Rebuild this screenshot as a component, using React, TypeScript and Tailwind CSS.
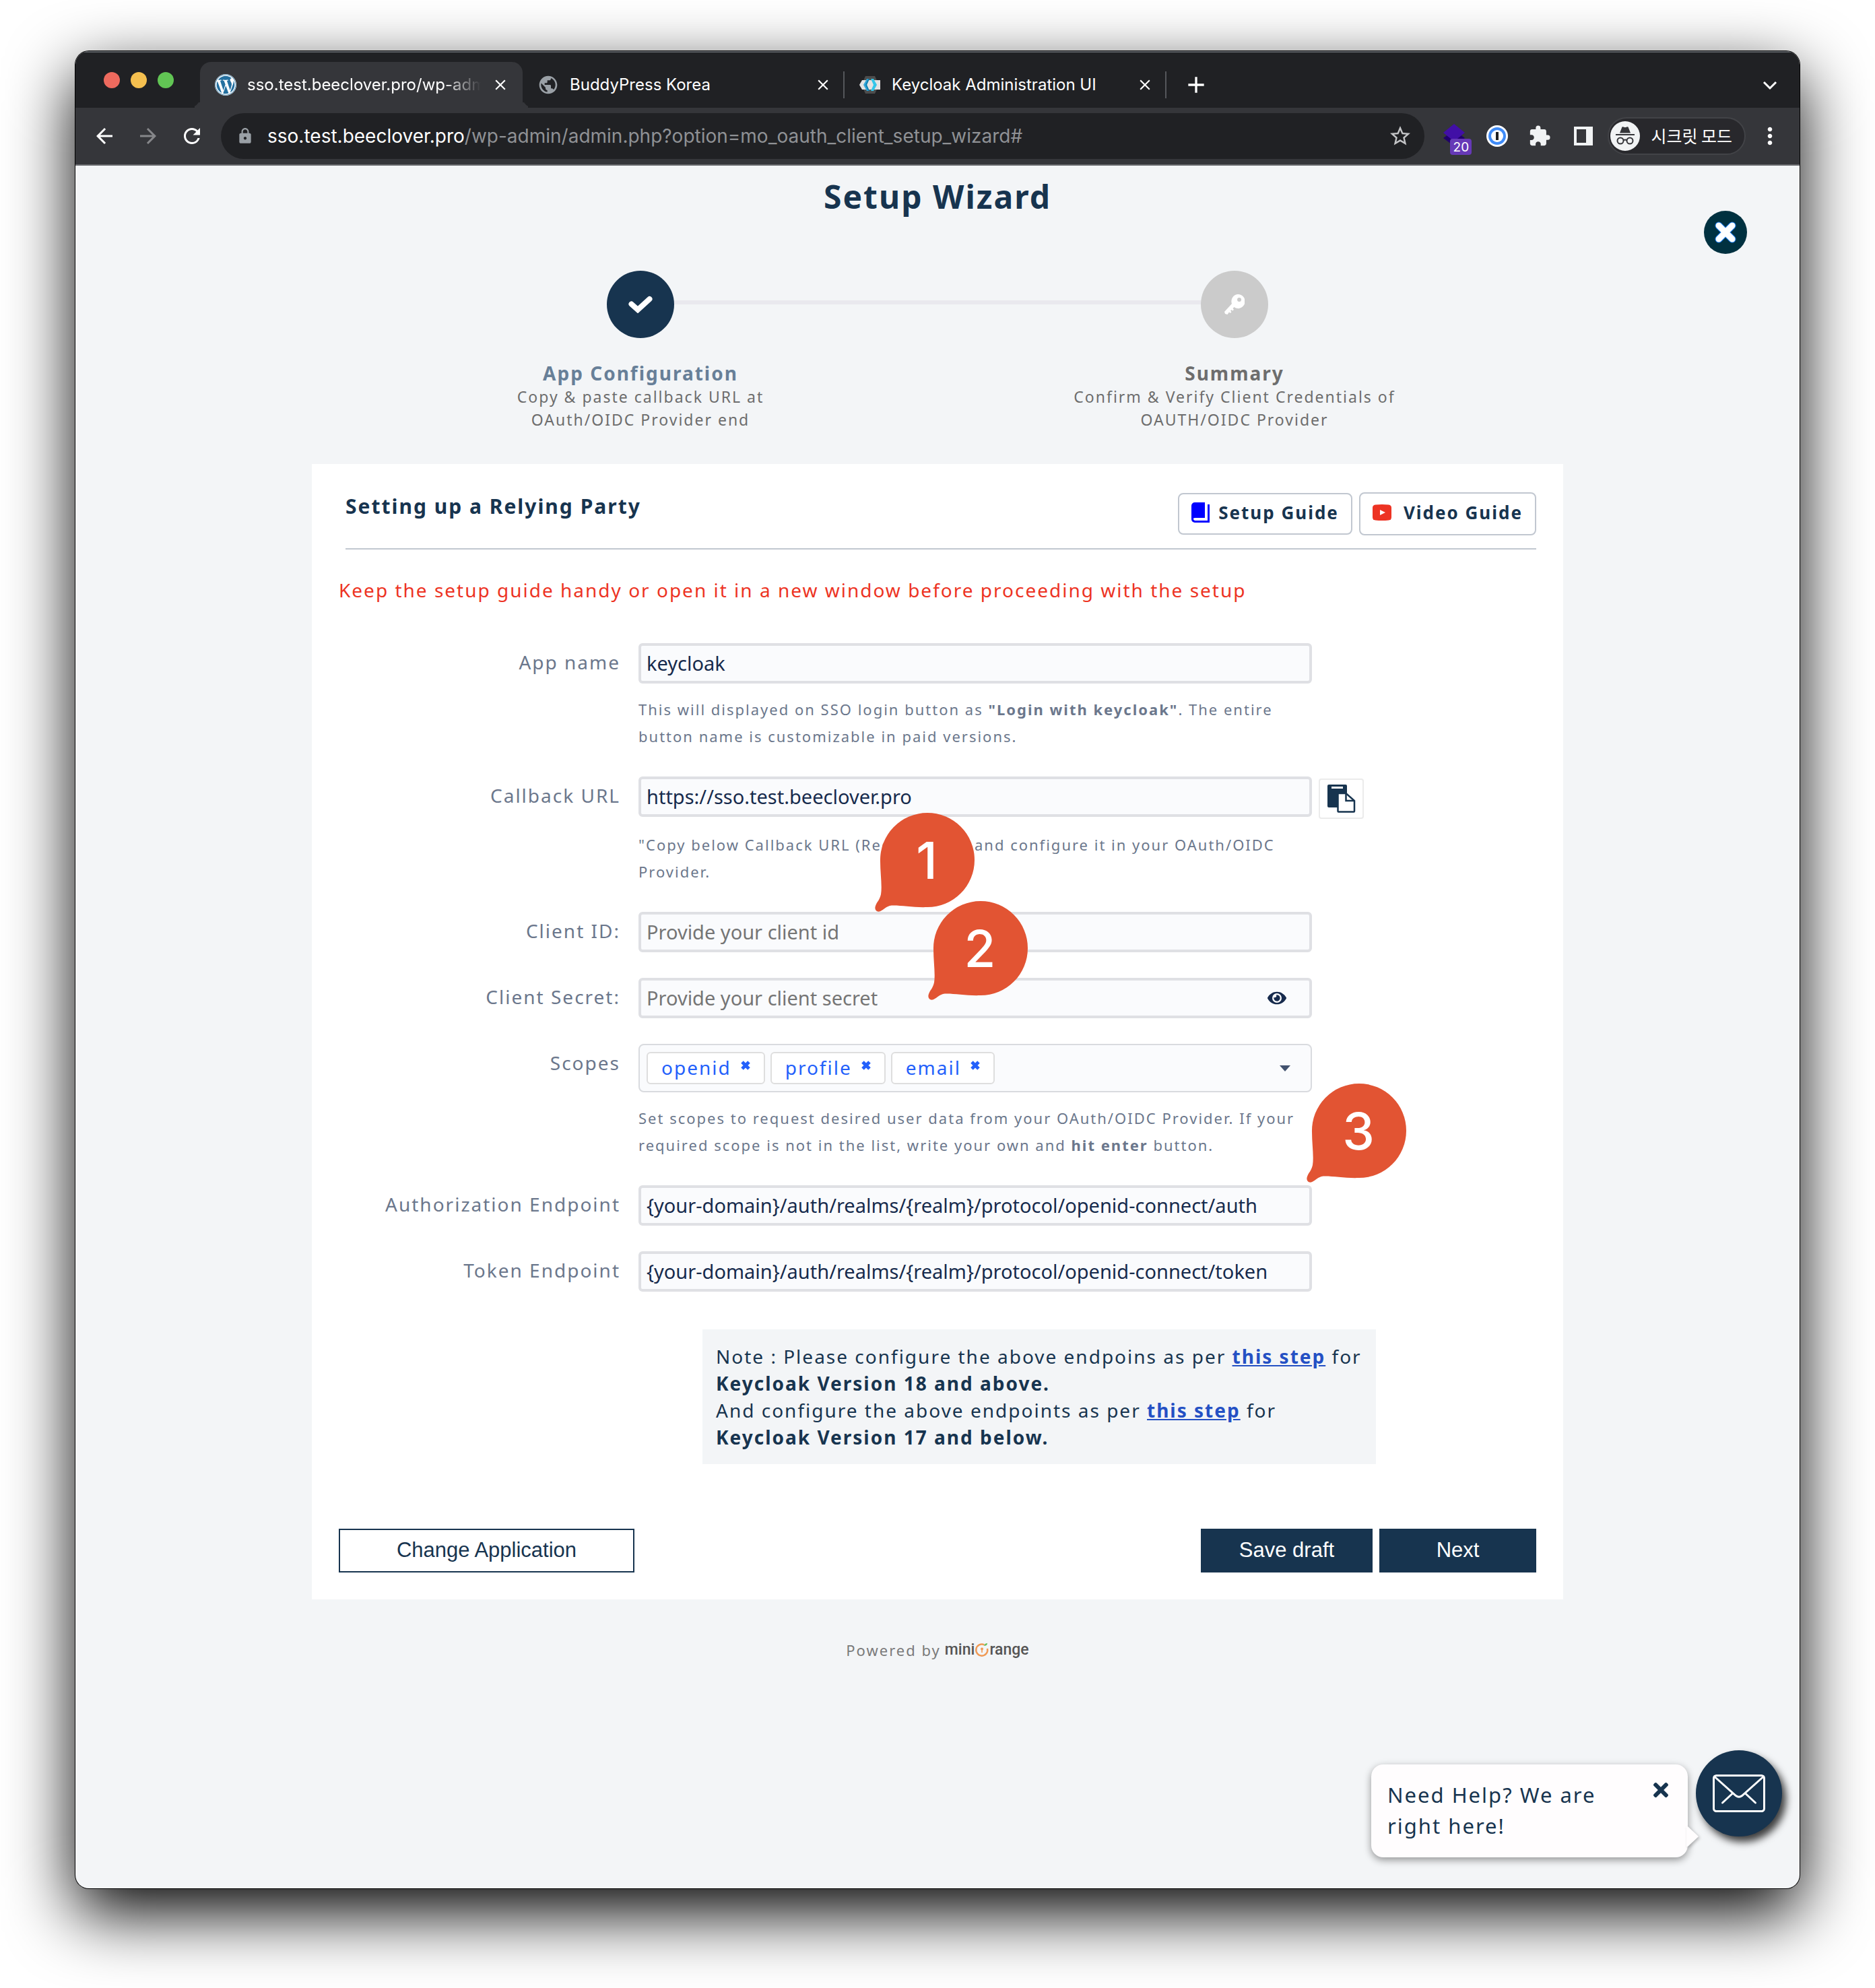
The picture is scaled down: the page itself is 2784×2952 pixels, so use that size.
import { useState, type ReactNode } from "react";
import { FaEye, FaTimes, FaWordpress } from "react-icons/fa";
import {
  MdAdd,
  MdArrowBack,
  MdArrowForward,
  MdClose,
  MdExtension,
  MdLock,
  MdMoreVert,
  MdPublic,
  MdRefresh,
  MdStarBorder,
} from "react-icons/md";

function KeycloakIcon() {
  return (
    <svg viewBox="0 0 32 32" className="size-8 shrink-0" aria-hidden="true">
      <path d="M9 3h14l6 13-6 13H9L3 16z" fill="#4d4d4d" />
      <path d="M4 9h27v14H4L0 16z" fill="#e3e3e3" />
      <path d="M11 7h4l-4 9 4 9h-4l-5-9z" fill="#33a7d8" />
      <path d="M17 7h4l5 9-5 9h-4l4-9z" fill="#33c6e9" />
      <path d="M13 7h2l-4 9 4 9h-2l-4-9z" fill="#0d7fb0" />
    </svg>
  );
}

function BookIcon() {
  return (
    <svg viewBox="0 0 28 30" className="h-[30px] w-7 shrink-0" aria-hidden="true">
      <path d="M5 0h15v23H5.500a2 2 0 0 0-2 1.500A2 2 0 0 0 5.500 27H24V3h3v27H5a5 5 0 0 1-5-5V5a5 5 0 0 1 5-5z" fill="#0000ff" />
      <path d="M3 24.500h19V3" fill="none" stroke="#fff" strokeWidth="2" />
    </svg>
  );
}

function VideoIcon() {
  return (
    <svg viewBox="0 0 28 24" className="h-6 w-7 shrink-0" aria-hidden="true">
      <path d="M4 .5Q14-.5 24 .5q4 .5 4 4.500v14q0 4-4 4.500-10 1-20 0-4-.5-4-4.500V5Q0 1 4 .5z" fill="#ed3323" />
      <path d="M11 8l8 4-8 4z" fill="#fff" />
    </svg>
  );
}

function CheckIcon() {
  return (
    <svg viewBox="0 0 36 26" className="h-[26px] w-9" aria-hidden="true">
      <path d="M4.500 12.500l9.500 8.500L31.500 5" fill="none" stroke="currentColor" strokeWidth="8" strokeLinecap="round" strokeLinejoin="miter" />
    </svg>
  );
}

function KeyIcon() {
  return (
    <svg viewBox="0 0 30 30" className="size-[30px]" aria-hidden="true">
      <path
        fillRule="evenodd"
        d="M19.500 0A10.500 10.500 0 1 1 17 20.500L14.500 19l-2 2 1.500 1.800-1.800 1.800-1.700-1.600-1.500 1.500 1.500 1.700-1.700 1.700-1.800-1.500L4.500 30 1 29 0 26 11 14A10.500 10.500 0 0 1 19.500 0zM22 5a3 3 0 1 0 .1 6A3 3 0 0 0 22 5z"
        fill="currentColor"
      />
    </svg>
  );
}

function PasteIcon() {
  return (
    <svg viewBox="0 0 42 42" className="size-[42px]" aria-hidden="true">
      <path d="M2 0h25q2 0 2 2v10L16 34H2q-2 0-2-2V2q0-2 2-2z" fill="#17344f" />
      <path d="M6 3h17v3H6z" fill="#fff" />
      <path d="M15.500 13h12L40 24v15.500q0 1-1 1H16.500q-1 0-1-1z" fill="#fff" stroke="#17344f" strokeWidth="2.500" />
      <path d="M27.500 13v11H40" fill="none" stroke="#17344f" strokeWidth="2.500" />
    </svg>
  );
}

function IncognitoIcon() {
  return (
    <svg viewBox="0 0 44 44" className="size-11 shrink-0" aria-hidden="true">
      <circle cx="22" cy="22" r="22" fill="#f1f3f4" />
      <path d="M17.500 8.500q1-.5 2 0l2.500.8 2.500-.8q1-.5 2 0l3.500 9H14z" fill="#35363a" />
      <path d="M8 20h28" stroke="#35363a" strokeWidth="2" />
      <g fill="none" stroke="#35363a" strokeWidth="2">
        <circle cx="15" cy="29" r="4.500" />
        <circle cx="29" cy="29" r="4.500" />
        <path d="M19.500 28.500q2.500-2 5 0" />
      </g>
    </svg>
  );
}

function EnvelopeIcon() {
  return (
    <svg viewBox="0 0 78 56" className="h-14 w-[78px]" fill="none" stroke="#fff" strokeWidth="3" strokeLinecap="round" aria-hidden="true">
      <rect x="1.500" y="1.500" width="75" height="53" rx="4" />
      <path d="M2.500 3l32 28.500q4.500 3.500 9 0L75.500 3M29 28.500L14.500 42M49 28.500L63.500 42" />
    </svg>
  );
}

function OrangeIcon() {
  return (
    <svg viewBox="0 0 22 22" className="size-[22px]" aria-hidden="true">
      <path d="M14.500 3.500A8.500 8.500 0 1 0 19 9" fill="none" stroke="#f09a55" strokeWidth="2.500" />
      <circle cx="11" cy="9.500" r="2" fill="#f09a55" />
      <path d="M10.200 10h1.600v5h-1.600z" fill="#f09a55" />
      <path d="M14 5q1-4 5-4 0 4-5 4z" fill="#6abf5b" />
    </svg>
  );
}

function Pin({ label, className }: { label: string; className: string }) {
  return (
    <div className={`absolute flex size-[140px] items-center justify-center ${className}`}>
      <svg viewBox="0 0 150 150" className="absolute top-0 -left-2 size-[150px]" aria-hidden="true">
        <path
          d="M78 0a70 70 0 1 1 0 140C56 141 32 136 22 138 15 140 12 145 7 146.500 2 147.500-1 143 1 138 3 132 7 130 9 121 11 108 8 90 8 72A70 70 0 0 1 78 0z"
          fill="#e25433"
        />
      </svg>
      <span className="relative font-['Inter',sans-serif] text-[76px] leading-none font-medium text-white">{label}</span>
    </div>
  );
}

function Tab({ icon, title, active }: { icon: ReactNode; title: string; active?: boolean }) {
  return (
    <div
      className={
        active
          ? "relative flex h-[68px] w-[479px] items-center gap-4 rounded-t-2xl bg-[#35363a] pr-5 pl-[22px] before:absolute before:bottom-0 before:-left-4 before:size-4 before:rounded-br-2xl before:shadow-[8px_8px_0_0_#35363a] before:[clip-path:inset(0)] after:absolute after:-right-4 after:bottom-0 after:size-4 after:rounded-bl-2xl after:shadow-[-8px_8px_0_0_#35363a] after:[clip-path:inset(0)]"
          : "flex h-[68px] w-[476px] items-center gap-4 pr-[17px] pl-[22px]"
      }
    >
      {icon}
      <button
        type="button"
        className={
          active
            ? "min-w-0 flex-1 overflow-hidden text-left whitespace-nowrap [mask-image:linear-gradient(to_right,black_84%,transparent)]"
            : "min-w-0 flex-1 overflow-hidden text-left whitespace-nowrap"
        }
      >
        {title}
      </button>
      <button type="button" aria-label={`Close ${title}`} className="shrink-0">
        <MdClose className="size-[26px]" stroke="currentColor" />
      </button>
    </div>
  );
}

function Step({ icon, title, active, children }: { icon: ReactNode; title: string; active?: boolean; children: ReactNode }) {
  const line = <div className="mb-1.5 h-1.5 flex-1 bg-[#e9e9ee]" />;
  return (
    <li className="text-center">
      <div className="flex items-center">
        {active ? <div className="flex-1" /> : line}
        <div
          className={
            active
              ? "flex size-[100px] items-center justify-center rounded-full bg-[#17344f] text-white"
              : "flex size-[100px] items-center justify-center rounded-full bg-[#cbcbcb] text-white"
          }
        >
          {icon}
        </div>
        {active ? line : <div className="flex-1" />}
      </div>
      <h2 className={active ? "mt-[34px] text-[28px] leading-9 font-bold text-[#677f98]" : "mt-[34px] text-[28px] leading-9 font-bold text-[#6d6d6d]"}>
        {title}
      </h2>
      <p className="text-[23px] leading-[34px] text-[#6d6d6d]">{children}</p>
    </li>
  );
}

function Row({ id, label, help, aside, children }: { id: string; label: string; help?: ReactNode; aside?: ReactNode; children: ReactNode }) {
  return (
    <div className="grid grid-cols-[418px_minmax(0,1000px)_68px] items-start">
      <label htmlFor={id} className="pt-2 text-right text-[28px] leading-10 text-[#6b778c]">
        {label}
      </label>
      <div className="ml-[27px] -mr-[27px]">{children}</div>
      <div className="ml-[37px]">{aside}</div>
      {help && <p className="col-start-2 mt-[18px] -mr-[27px] mb-0.5 ml-[27px] text-[22px] leading-10 text-[#6b778c]">{help}</p>}
    </div>
  );
}

const inputClass =
  "block h-[60px] w-full rounded-md border-4 border-[#dfe0e4] bg-[#fafbfd] px-2 pb-0.5 text-[29px] tracking-normal text-[#172b4d] placeholder:text-[#757575] outline-none";

export default function App() {
  const [scopes, setScopes] = useState(["openid", "profile", "email"]);
  const [showHelp, setShowHelp] = useState(true);

  return (
    <div className="flex min-h-screen flex-col bg-white px-28 pt-[76px] pb-[148px]">
      <div className="flex flex-1 flex-col overflow-hidden rounded-[20px] bg-[#f3f5f7] shadow-[0_0_0_1px_#000,0_36px_100px_#000]">
        <header className="font-['Inter',sans-serif] text-white">
          <div className="flex h-[84px] items-end border-t-2 border-[#5f6368] bg-[#202124] text-[24px]">
            <div className="flex h-[68px] w-[185px] shrink-0 items-center gap-4 pb-3.5 pl-[42px]">
              <button type="button" aria-label="Close window" className="size-6 rounded-full bg-[#ed6a5e]" />
              <button type="button" aria-label="Minimize window" className="size-6 rounded-full bg-[#f4bf4f]" />
              <button type="button" aria-label="Zoom window" className="size-6 rounded-full bg-[#61c554]" />
            </div>
            <Tab
              active
              title="sso.test.beeclover.pro/wp-admin"
              icon={
                <span className="flex size-8 shrink-0 items-center justify-center rounded-full bg-white">
                  <FaWordpress className="size-8 text-[#2470a0]" />
                </span>
              }
            />
            <Tab title="BuddyPress Korea" icon={<MdPublic className="size-8 shrink-0 text-[#9aa0a6]" />} />
            <span className="mb-3.5 h-10 w-0.5 bg-[#55575b]" />
            <Tab title="Keycloak Administration UI" icon={<KeycloakIcon />} />
            <span className="mb-3.5 h-10 w-0.5 bg-[#55575b]" />
            <button type="button" aria-label="New tab" className="flex h-[68px] items-center pl-6">
              <MdAdd className="size-10" />
            </button>
            <button type="button" aria-label="Search tabs" className="mr-8 ml-auto flex h-[68px] items-center">
              <svg viewBox="0 0 24 24" className="size-6" fill="none" stroke="currentColor" strokeWidth="3" aria-hidden="true">
                <path d="M3 8l9 9 9-9" />
              </svg>
            </button>
          </div>
          <div className="flex h-[86px] items-center border-b-2 border-[#6a6b6f] bg-[#35363a]">
            <div className="flex w-[216px] shrink-0 items-center gap-[29px] pl-[25px]">
              <button type="button" aria-label="Back"><MdArrowBack className="size-9" /></button>
              <button type="button" aria-label="Forward" className="text-[#86878a]"><MdArrowForward className="size-9" /></button>
              <button type="button" aria-label="Reload"><MdRefresh className="size-9" /></button>
            </div>
            <div className="flex h-[68px] flex-1 items-center rounded-full bg-[#202124] pr-[18px] pl-[23px] text-[28px]">
              <MdLock className="size-[26px] shrink-0 text-[#9aa0a6]" />
              <div role="textbox" aria-label="Address" className="ml-5 flex-1 whitespace-nowrap text-[#8f9195]">
                <span className="text-white">sso.test.beeclover.pro</span>/wp-admin/admin.php?option=mo_oauth_client_setup_wizard#
              </div>
              <button type="button" aria-label="Bookmark this tab"><MdStarBorder className="size-9 text-[#c4c5c7]" /></button>
            </div>
            <div className="flex shrink-0 items-center pr-6">
              <button type="button" aria-label="Extension with 20 notifications" className="relative ml-7 h-14 w-[42px]">
                <svg viewBox="0 0 34 34" className="absolute top-2.5 left-0 size-[34px]" aria-hidden="true">
                  <path d="M16 9l16 12-16 12L0 21z" fill="#20006b" />
                  <path d="M16 0l16 13-16 13L0 13z" fill="#410fa6" />
                </svg>
                <span className="absolute right-0 bottom-0 flex h-6 w-8 items-center justify-center rounded bg-[#6639b7] text-[19px] leading-none">20</span>
              </button>
              <button type="button" aria-label="1Password" className="ml-[22px]">
                <svg viewBox="0 0 32 32" className="size-8" aria-hidden="true">
                  <circle cx="16" cy="16" r="16" fill="#fff" />
                  <circle cx="16" cy="16" r="13" fill="#3f8bf7" />
                  <circle cx="16" cy="16" r="9" fill="#fff" />
                  <rect x="14" y="10" width="4" height="12" fill="#202124" />
                </svg>
              </button>
              <button type="button" aria-label="Extensions" className="ml-[30px]"><MdExtension className="size-[34px] text-[#f1f3f4]" /></button>
              <button type="button" aria-label="Side panel" className="ml-[34px]">
                <svg viewBox="0 0 28 28" className="size-7" aria-hidden="true">
                  <path fillRule="evenodd" d="M0 0h28v28H0zM4 4v20h14V4z" fill="#f1f3f4" />
                </svg>
              </button>
              <button type="button" className="ml-[22px] flex h-14 items-center gap-4 rounded-full border-2 border-[#424347] bg-[#28282c] pr-[18px] pl-0.5 font-['Noto_Sans_CJK_KR',sans-serif] text-[25px]">
                <IncognitoIcon />
                시크릿 모드
              </button>
              <button type="button" aria-label="Menu" className="ml-4"><MdMoreVert className="size-10" /></button>
            </div>
          </div>
        </header>

        <main className="relative flex flex-1 flex-col items-center px-16 pt-3.5 font-['Noto_Sans',sans-serif] tracking-[2px] text-[#17344f]">
          <h1 className="text-[48px] leading-[64px] font-bold">Setup Wizard</h1>
          <button type="button" aria-label="Close wizard" className="absolute top-[67px] right-[78px] flex size-16 items-center justify-center rounded-full bg-[#003140] text-white">
            <svg viewBox="0 0 34 34" className="size-[34px]" strokeLinecap="round" aria-hidden="true">
              <path d="M7 7l20 20M27 7L7 27" stroke="#1478e8" strokeWidth="11" />
              <path d="M7 7l20 20M27 7L7 27" stroke="#fff" strokeWidth="9" />
            </svg>
          </button>

          <ol className="mt-[78px] grid w-full max-w-[1764px] grid-cols-2">
            <Step active title="App Configuration" icon={<CheckIcon />}>
              Copy &amp; paste callback URL at
              <br />
              OAuth/OIDC Provider end
            </Step>
            <Step title="Summary" icon={<KeyIcon />}>
              Confirm &amp; Verify Client Credentials of
              <br />
              OAUTH/OIDC Provider
            </Step>
          </ol>

          <section className="mt-[49px] w-full max-w-[1858px] bg-white px-10 pt-[42px] pb-10">
            <div className="ml-2.5 flex h-[85px] items-start justify-between border-b-2 border-[#c1c7d0]">
              <h2 className="text-[30px] leading-[42px] font-bold">Setting up a Relying Party</h2>
              <div className="flex items-center gap-2.5 text-[26px] font-bold">
                <a href="#setup-guide" className="flex h-[62px] items-center gap-3 rounded-lg border-2 border-[#c1c7d0] px-[18px] pb-1">
                  <BookIcon />
                  Setup Guide
                </a>
                <a href="#video-guide" className="flex h-16 items-center gap-[18px] rounded-lg border-2 border-[#c1c7d0] px-[18px] pb-1">
                  <VideoIcon />
                  Video Guide
                </a>
              </div>
            </div>
            <p className="mt-10 text-[28px] leading-10 text-[#ed3323]">
              Keep the setup guide handy or open it in a new window before proceeding with the setup
            </p>

            <form className="mt-[59px] flex flex-col gap-[38px]" onSubmit={(e) => e.preventDefault()}>
              <Row
                id="app-name"
                label="App name"
                help={
                  <>
                    This will displayed on SSO login button as <b>"Login with keycloak"</b>. The entire
                    <br />
                    button name is customizable in paid versions.
                  </>
                }
              >
                <input id="app-name" className={inputClass} defaultValue="keycloak" />
              </Row>

              <div className="relative">
                <Row
                  id="callback-url"
                  label="Callback URL"
                  aside={
                    <button type="button" aria-label="Copy callback URL" className="mt-[3px] flex h-[60px] w-[67px] items-center justify-center rounded border-2 border-[#ebebeb]">
                      <PasteIcon />
                    </button>
                  }
                  help={
                    <>
                      "Copy below Callback URL (Redirect URI) and configure it in your OAuth/OIDC
                      <br />
                      Provider.
                    </>
                  }
                >
                  <input id="callback-url" className={inputClass} defaultValue="https://sso.test.beeclover.pro" />
                </Row>
                <Pin label="1" className="top-[54px] left-[804px] z-10" />
              </div>

              <Row id="client-id" label="Client ID:">
                <input id="client-id" className={inputClass} placeholder="Provide your client id" />
              </Row>

              <div className="relative">
                <Row id="client-secret" label="Client Secret:">
                  <div className="relative">
                    <input id="client-secret" type="password" className={inputClass} placeholder="Provide your client secret" />
                    <button type="button" aria-label="Show secret" className="absolute inset-y-0 right-[38px] text-[#172b4d]">
                      <FaEye className="size-7" />
                    </button>
                  </div>
                </Row>
                <Pin label="2" className="-top-[114px] left-[883px] z-10" />
              </div>

              <div className="relative">
                <Row
                  id="scopes"
                  label="Scopes"
                  help={
                    <>
                      Set scopes to request desired user data from your OAuth/OIDC Provider. If your
                      <br />
                      required scope is not in the list, write your own and <b>hit enter</b> button.
                    </>
                  }
                >
                  <div className="flex h-[72px] items-center gap-2 rounded-lg border-2 border-[#d9dbdf] bg-[#fafbfd] px-2.5">
                    {scopes.map((scope) => (
                      <span key={scope} className="flex h-12 items-center gap-3.5 rounded-md border-2 border-[#dedede] bg-white px-5 pb-0.5 text-[28px] leading-none text-[#2360fb]">
                        {scope}
                        <button
                          type="button"
                          aria-label={`Remove ${scope}`}
                          className="mb-1.5"
                          onClick={() => setScopes(scopes.filter((s) => s !== scope))}
                        >
                          <svg viewBox="0 0 14 14" className="size-3.5" aria-hidden="true">
                            <path d="M2 2l10 10M12 2L2 12" stroke="currentColor" strokeWidth="5" />
                          </svg>
                        </button>
                      </span>
                    ))}
                    <input id="scopes" className="h-12 min-w-0 flex-1 bg-transparent text-[28px] outline-none" />
                    <button type="button" aria-label="Open scope list" className="mr-5">
                      <svg viewBox="0 0 16 9" className="h-[9px] w-4" aria-hidden="true">
                        <path d="M0 0h16L8 9z" fill="#42526e" />
                      </svg>
                    </button>
                  </div>
                </Row>
                <Pin label="3" className="top-[59px] left-[1445px] z-10" />
              </div>

              <Row id="auth-endpoint" label="Authorization Endpoint">
                <input id="auth-endpoint" className={inputClass} defaultValue="{your-domain}/auth/realms/{realm}/protocol/openid-connect/auth" />
              </Row>
              <Row id="token-endpoint" label="Token Endpoint">
                <input id="token-endpoint" className={inputClass} defaultValue="{your-domain}/auth/realms/{realm}/protocol/openid-connect/token" />
              </Row>

              <p className="mt-[18px] ml-[540px] max-w-[1000px] bg-[#f3f5f7] p-5 text-[28px] leading-10">
                Note : Please configure the above endpoins as per{" "}
                <a href="#version-18" className="font-bold text-[#2450c4] underline">this step</a> for
                <br />
                <b>Keycloak Version 18 and above.</b>
                <br />
                And configure the above endpoints as per{" "}
                <a href="#version-17" className="font-bold text-[#2450c4] underline">this step</a> for
                <br />
                <b>Keycloak Version 17 and below.</b>
              </p>

              <div className="mt-[58px] flex gap-2.5 font-['Liberation_Sans',sans-serif] text-[31px] tracking-normal">
                <button type="button" className="mr-auto h-[65px] w-[439px] border-2 border-[#17344f] bg-white">Change Application</button>
                <button type="button" className="h-[65px] w-[255px] bg-[#17344f] text-white">Save draft</button>
                <button type="submit" className="h-[65px] w-[233px] bg-[#17344f] text-white">Next</button>
              </div>
            </form>
          </section>

          <footer className="mt-[58px] flex items-center gap-1.5 text-[22px] leading-[34px] text-[#7a7a7a]">
            Powered by
            <span className="flex items-center font-['Roboto',sans-serif] text-[23px] font-medium tracking-normal text-[#555]">
              mini
              <OrangeIcon />
              range
            </span>
          </footer>

          <div className="absolute right-[26px] bottom-[46px] flex items-end gap-3">
            {showHelp && (
              <div className="relative flex w-[470px] items-start justify-between rounded-[18px] bg-[#fffdfe] pt-[22px] pr-6 pb-6 pl-6 text-[31px] leading-[46px] shadow-[0_4px_12px_rgba(0,0,0,0.4)]">
                <p>
                  Need Help? We are
                  <br />
                  right here!
                </p>
                <button type="button" aria-label="Dismiss" onClick={() => setShowHelp(false)}>
                  <FaTimes className="size-8" />
                </button>
                <svg viewBox="0 0 18 30" className="absolute -right-4 bottom-4 h-[30px] w-[18px] drop-shadow-[2px_2px_2px_rgba(0,0,0,0.25)]" aria-hidden="true">
                  <path d="M2 0l16 15L2 30H0V0z" fill="#fffdfe" />
                </svg>
              </div>
            )}
            <button type="button" aria-label="Contact support" className="mb-[31px] flex size-32 items-center justify-center rounded-full bg-[#17344f] shadow-[6px_8px_12px_rgba(0,0,0,0.75)]">
              <EnvelopeIcon />
            </button>
          </div>
        </main>
      </div>
    </div>
  );
}
